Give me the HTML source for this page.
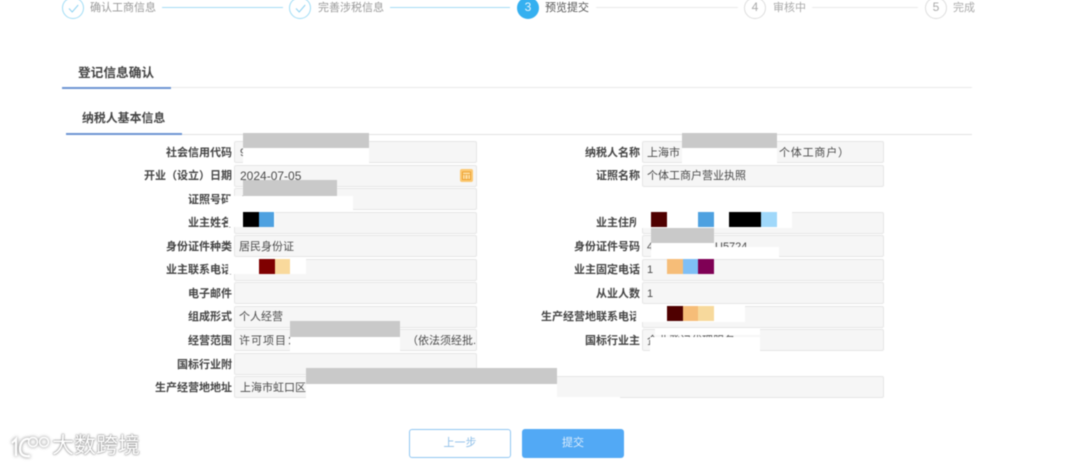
<!DOCTYPE html>
<html lang="zh">
<head>
<meta charset="utf-8">
<style>
html,body{margin:0;padding:0;background:#fff;}
body{width:1080px;height:467px;overflow:hidden;position:relative;font-family:"Liberation Sans","Noto Sans CJK SC",sans-serif;}
#p{position:absolute;left:0;top:0;width:1080px;height:467px;filter:blur(0.45px);}
#p div,#p span{position:absolute;}
.t{white-space:nowrap;line-height:16px;}
.s{font-size:11px;color:#999;height:16px;}
.c{width:20px;height:20px;border-radius:50%;border:1.5px solid #9fdcf5;background:#fff;top:-3px;}
.n{border-color:#ddd;color:#aaa;font-size:12px;text-align:center;line-height:20px;}
.l{height:1px;top:7px;}
.b{box-sizing:border-box;height:22px;background:#f6f6f6;border:1px solid #e6e6e6;border-radius:2px;}
.lb{font-size:11px;font-weight:700;color:#444;text-align:right;height:16px;line-height:16px;white-space:nowrap;margin-top:1px;}
.v{font-size:11px;color:#4a4a4a;height:16px;line-height:16px;white-space:nowrap;margin-top:1px;}
.g{background:#c9c9c9;}
.w{background:#fff;}
</style>
</head>
<body>
<div id="p">
<!-- steps -->
<div class="c" style="left:62px"></div>
<svg style="position:absolute;left:62px;top:-3px" width="23" height="23"><path d="M7 11.5l3.2 3.5 6-7" fill="none" stroke="#8fd3f2" stroke-width="1"/></svg>
<div class="t s" style="left:90px;top:0">确认工商信息</div>
<div class="l" style="left:162px;width:121px;background:#a5dcf5"></div>
<div class="c" style="left:289px"></div>
<svg style="position:absolute;left:289px;top:-3px" width="23" height="23"><path d="M7 11.5l3.2 3.5 6-7" fill="none" stroke="#8fd3f2" stroke-width="1"/></svg>
<div class="t s" style="left:318px;top:0">完善涉税信息</div>
<div class="l" style="left:390px;width:120px;background:#a5dcf5"></div>
<div class="c" style="left:517px;background:#35b0f0;border-color:#35b0f0;color:#e8f6fe;font-size:12px;text-align:center;line-height:18px">3</div>
<div class="t s" style="left:545px;top:0;color:#555">预览提交</div>
<div class="l" style="left:596px;width:142px;background:#eaeaea"></div>
<div class="c n" style="left:744px;line-height:18px">4</div>
<div class="t s" style="left:773px;top:0;color:#aaa">审核中</div>
<div class="l" style="left:812px;width:106px;background:#eaeaea"></div>
<div class="c n" style="left:925px;line-height:18px">5</div>
<div class="t s" style="left:953px;top:0;color:#aaa">完成</div>

<!-- titles -->
<div class="t" style="left:78px;top:64px;font-size:12.7px;font-weight:700;color:#444;line-height:18px">登记信息确认</div>
<div style="left:62px;top:87px;width:910px;height:1px;background:#eaeaea"></div>
<div style="left:62px;top:87px;width:109px;height:1.5px;background:#6d95d3"></div>
<div class="t" style="left:82px;top:110px;font-size:11.9px;font-weight:700;color:#444">纳税人基本信息</div>
<div style="left:66px;top:134px;width:906px;height:1px;background:#e2e2e2"></div>
<div style="left:66px;top:133px;width:116px;height:1.5px;background:#6d95d3"></div>

<!-- left boxes -->
<div class="b" style="left:234px;top:141px;width:243px"></div>
<div class="b" style="left:234px;top:165px;width:243px"></div>
<div class="b" style="left:234px;top:188px;width:243px"></div>
<div class="b" style="left:234px;top:212px;width:243px"></div>
<div class="b" style="left:234px;top:235px;width:243px"></div>
<div class="b" style="left:234px;top:259px;width:243px"></div>
<div class="b" style="left:234px;top:282px;width:243px"></div>
<div class="b" style="left:234px;top:306px;width:243px"></div>
<div class="b" style="left:234px;top:329px;width:243px"></div>
<div class="b" style="left:234px;top:353px;width:243px"></div>
<div class="b" style="left:234px;top:376px;width:650px"></div>
<!-- right boxes -->
<div class="b" style="left:642px;top:141px;width:242px"></div>
<div class="b" style="left:642px;top:165px;width:242px"></div>
<div class="b" style="left:642px;top:212px;width:242px"></div>
<div class="b" style="left:642px;top:235px;width:242px"></div>
<div class="b" style="left:642px;top:259px;width:242px"></div>
<div class="b" style="left:642px;top:282px;width:242px"></div>
<div class="b" style="left:642px;top:306px;width:242px"></div>
<div class="b" style="left:642px;top:329px;width:242px"></div>

<!-- left labels -->
<div class="lb" style="left:100px;width:132px;top:144px">社会信用代码</div>
<div class="lb" style="left:100px;width:132px;top:167px">开业（设立）日期</div>
<div class="lb" style="left:100px;width:132px;top:191px">证照号码</div>
<div class="lb" style="left:100px;width:132px;top:214px">业主姓名</div>
<div class="lb" style="left:100px;width:132px;top:238px">身份证件种类</div>
<div class="lb" style="left:100px;width:132px;top:261px">业主联系电话</div>
<div class="lb" style="left:100px;width:132px;top:285px">电子邮件</div>
<div class="lb" style="left:100px;width:132px;top:308px">组成形式</div>
<div class="lb" style="left:100px;width:132px;top:332px">经营范围</div>
<div class="lb" style="left:100px;width:132px;top:356px">国标行业附</div>
<div class="lb" style="left:100px;width:132px;top:379px">生产经营地地址</div>
<!-- right labels -->
<div class="lb" style="left:500px;width:140px;top:144px">纳税人名称</div>
<div class="lb" style="left:500px;width:140px;top:167px">证照名称</div>
<div class="lb" style="left:500px;width:140px;top:214px">业主住所</div>
<div class="lb" style="left:500px;width:140px;top:238px">身份证件号码</div>
<div class="lb" style="left:500px;width:140px;top:261px">业主固定电话</div>
<div class="lb" style="left:500px;width:140px;top:285px">从业人数</div>
<div class="lb" style="left:500px;width:140px;top:308px">生产经营地联系电话</div>
<div class="lb" style="left:500px;width:140px;top:332px">国标行业主</div>

<!-- left values -->
<div class="v" style="left:240px;top:144px">9</div>
<div class="v" style="left:240px;top:167px;font-size:12px">2024-07-05</div>
<div class="v" style="left:240px;top:191px">1</div>
<div class="v" style="left:239px;top:238px">居民身份证</div>
<div class="v" style="left:239px;top:308px">个人经营</div>
<div class="v" style="left:239px;top:332px;letter-spacing:1px">许可项目：</div>
<div class="v" style="left:407px;top:332px;width:69px;overflow:hidden">（依法须经批..</div>
<div class="v" style="left:240px;top:379px">上海市虹口区</div>
<!-- calendar -->
<div style="left:460px;top:169px;width:13px;height:13px;background:#fbc872;border-radius:2px"></div>
<svg style="position:absolute;left:460px;top:169px" width="13" height="13"><rect x="2.5" y="3" width="8" height="7.5" fill="#fde0a8" stroke="#eda12f"/><path d="M2 5.5h9M5 5.5v5M8 5.5v5" stroke="#eda12f" stroke-width=".7"/></svg>
<!-- right values -->
<div class="v" style="left:647px;top:144px">上海市</div>
<div class="v" style="left:779px;top:144px;letter-spacing:.8px">个体工商户）</div>
<div class="v" style="left:647px;top:167px">个体工商户营业执照</div>
<div class="v" style="left:647px;top:238px">4</div>
<div class="v" style="left:715px;top:238px">U5724</div>
<div class="v" style="left:647px;top:261px">1</div>
<div class="v" style="left:647px;top:285px">1</div>
<div class="v" style="left:647px;top:332px">企业登记代理服务</div>

<!-- masks left -->
<div class="w" style="left:243px;top:148px;width:126px;height:15px"></div>
<div class="g" style="left:243px;top:133px;width:126px;height:15px"></div>
<div class="w" style="left:228px;top:196px;width:125px;height:16px"></div>
<div class="w" style="left:228px;top:212px;width:47px;height:15px"></div>
<div class="g" style="left:243px;top:180px;width:94px;height:16px"></div>
<div style="left:243px;top:212px;width:16px;height:15px;background:#000"></div>
<div style="left:259px;top:212px;width:15px;height:15px;background:#4ea1e0"></div>
<div class="w" style="left:228px;top:258px;width:78px;height:16px"></div>
<div style="left:259px;top:259px;width:16px;height:15px;background:#7f0000"></div>
<div style="left:275px;top:259px;width:15px;height:15px;background:#f9d99c"></div>
<div class="w" style="left:290px;top:337px;width:110px;height:15px"></div>
<div class="g" style="left:290px;top:321px;width:110px;height:16px"></div>
<div class="w" style="left:306px;top:384px;width:251px;height:16px"></div>
<div class="w" style="left:557px;top:397px;width:63px;height:3px"></div>
<div class="g" style="left:306px;top:368px;width:251px;height:16px"></div>

<!-- masks right -->
<div class="w" style="left:682px;top:148px;width:95px;height:15px"></div>
<div class="g" style="left:682px;top:133px;width:95px;height:15px"></div>
<div class="w" style="left:636px;top:211px;width:156px;height:17px"></div>
<div style="left:651px;top:212px;width:16px;height:15px;background:#4f0000"></div>
<div style="left:698px;top:212px;width:16px;height:15px;background:#4ea1e0"></div>
<div style="left:729px;top:212px;width:32px;height:15px;background:#000"></div>
<div style="left:761px;top:212px;width:16px;height:15px;background:#a0d8fa"></div>
<div class="w" style="left:651px;top:243px;width:63px;height:15px"></div>
<div class="w" style="left:714px;top:247px;width:65px;height:11px"></div>
<div class="g" style="left:651px;top:228px;width:63px;height:15px"></div>
<div class="w" style="left:651px;top:255px;width:79px;height:4px"></div>
<div style="left:667px;top:259px;width:16px;height:15px;background:#f6bd78"></div>
<div style="left:683px;top:259px;width:15px;height:15px;background:#7fbff5"></div>
<div style="left:698px;top:259px;width:16px;height:15px;background:#7f0055"></div>
<div class="w" style="left:636px;top:305px;width:109px;height:17px"></div>
<div style="left:667px;top:306px;width:16px;height:15px;background:#4f0000"></div>
<div style="left:683px;top:306px;width:15px;height:15px;background:#f6bd78"></div>
<div style="left:698px;top:306px;width:16px;height:15px;background:#f7d99c"></div>
<div class="w" style="left:650px;top:337px;width:110px;height:15px"></div>
<div class="w" style="left:655px;top:328px;width:105px;height:7px"></div>

<!-- buttons -->
<div style="box-sizing:border-box;left:409px;top:429px;width:102px;height:29px;border:1px solid #90c6f2;border-radius:3px;background:#fff;color:#8fbfe8;font-size:11px;text-align:center;line-height:27px">上一步</div>
<div style="left:522px;top:429px;width:102px;height:29px;border-radius:3px;background:#52a9f5;color:#dcedfc;font-size:11px;text-align:center;line-height:29px">提交</div>

<!-- watermark -->
<svg style="position:absolute;left:8px;top:434px;filter:drop-shadow(0 0 1.5px #777)" width="44" height="26"><g fill="none" stroke="#fff" stroke-width="2.2"><path d="M4 9l4-4v17"/><path d="M21 5c-6-1-9 5-9 10 0 6 5 8 10 7"/></g><g fill="none" stroke="#fff" stroke-width="1.5"><circle cx="25" cy="8" r="4.5"/><circle cx="36" cy="8" r="4.5"/></g></svg>
<div class="t" style="left:52px;top:433px;font-size:22px;line-height:26px;color:#fff;text-shadow:0 0 2px #777,0 0 1px #777;">大数跨境</div>
</div>
</body>
</html>
